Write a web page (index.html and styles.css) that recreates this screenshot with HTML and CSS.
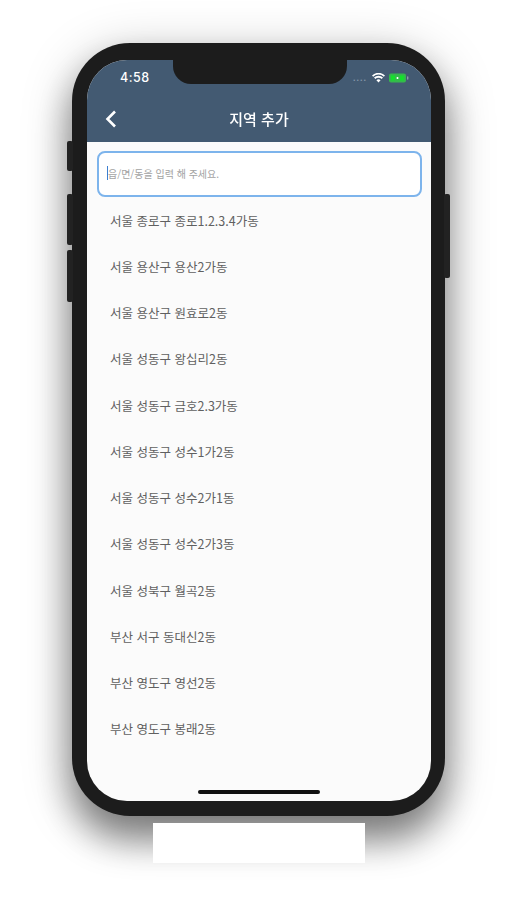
FILE: index.html
```html
<!DOCTYPE html>
<html lang="ko">
<head>
<meta charset="utf-8">
<title>지역 추가</title>
<link rel="stylesheet" href="styles.css">
</head>
<body>
<div class="phone">
  <span class="side-btn left b1"></span>
  <span class="side-btn left b2"></span>
  <span class="side-btn left b3"></span>
  <span class="side-btn right b4"></span>
  <div class="screen">
    <header class="appbar">
      <div class="status">
        <span class="time">4:58</span>
        <span class="status-icons">
          <span class="signal">....</span>
          <svg class="wifi" width="13" height="10" viewBox="0 0 13 10"><path d="M6.5 9.6 L4.4 7.2 A3 3 0 0 1 8.6 7.2Z M3.3 6 L2 4.6 A6.4 6.4 0 0 1 11 4.6 L9.7 6 A4.6 4.6 0 0 0 3.3 6Z M1.2 3.7 L0 2.5 A9.2 9.2 0 0 1 13 2.5 L11.8 3.7 A7.6 7.6 0 0 0 1.2 3.7Z" fill="#fff"/></svg>
          <svg class="battery" width="20" height="10" viewBox="0 0 20 10"><rect x="0" y="0.5" width="17" height="9" rx="2" fill="#35b94c"/><rect x="18" y="3.2" width="1.4" height="3.6" rx="0.7" fill="#8a9aa8"/><path d="M2 2.5h4v5H2z M11 2.5h4v5h-4z" fill="#14e02c"/><path d="M7.5 5h2M8.5 4v2" stroke="#fff" stroke-width="1.2" fill="none"/></svg>
        </span>
      </div>
      <div class="titlebar">
        <svg class="back" width="12" height="18" viewBox="0 0 12 18"><path d="M10 1.5 L2.5 9 L10 16.5" fill="none" stroke="#fff" stroke-width="2.6"/></svg>
        <h1 class="title">지역 추가</h1>
      </div>
    </header>
    <div class="notch"></div>
    <div class="search">
      <div class="field"><i class="caret"></i><span class="placeholder">읍/면/동을 입력 해 주세요.</span></div>
    </div>
    <ul class="list">
      <li>서울 종로구 종로1.2.3.4가동</li>
      <li>서울 용산구 용산2가동</li>
      <li>서울 용산구 원효로2동</li>
      <li>서울 성동구 왕십리2동</li>
      <li>서울 성동구 금호2.3가동</li>
      <li>서울 성동구 성수1가2동</li>
      <li>서울 성동구 성수2가1동</li>
      <li>서울 성동구 성수2가3동</li>
      <li>서울 성북구 월곡2동</li>
      <li>부산 서구 동대신2동</li>
      <li>부산 영도구 영선2동</li>
      <li>부산 영도구 봉래2동</li>
    </ul>
    <div class="home"></div>
  </div>
</div>
<div class="label-patch"></div>
</body>
</html>
```

FILE: styles.css
```css
* { box-sizing: border-box; }
html, body { margin: 0; padding: 0; }
body {
  width: 517px;
  height: 900px;
  background: #fff;
  overflow: hidden;
  position: relative;
  font-family: "Noto Sans CJK KR", "Noto Sans", sans-serif;
  padding: 43px 72px 0;
}
.phone {
  position: relative;
  width: 373px;
  height: 773px;
  padding: 17px 14px 15px 15px;
  background: #1c1c1c;
  border-radius: 58px;
  box-shadow: 0 24px 36px rgba(0,0,0,.42), 0 10px 50px rgba(0,0,0,.26);
  filter: blur(.7px);
}
.side-btn {
  position: absolute;
  width: 6px;
  background: #222;
  border-radius: 2px;
}
.left { left: -5px; }
.right { right: -5px; }
.b1 { top: 98px; height: 30px; }
.b2 { top: 151px; height: 51px; }
.b3 { top: 207px; height: 52px; }
.b4 { top: 151px; height: 84px; }
.screen {
  position: relative;
  width: 344px;
  height: 741px;
  background: #fbfbfb;
  border-radius: 40px;
  overflow: hidden;
}
.appbar {
  height: 82px;
  background: #435a72;
  color: #fff;
  display: flex;
  flex-direction: column;
}
.status {
  height: 38px;
  padding: 7px 22px 0 33px;
  display: flex;
  justify-content: space-between;
  align-items: flex-start;
}
.time { font: 500 12.5px/22px "Inter", sans-serif; letter-spacing: .5px; }
.status-icons { display: flex; align-items: center; gap: 4px; height: 22px; }
.signal { font: 700 9px/10px "Liberation Sans", sans-serif; color: #8497a8; letter-spacing: 1px; margin-right: 1px; }
.titlebar {
  flex: 1;
  position: relative;
  display: flex;
  align-items: flex-start;
  justify-content: center;
}
.back { position: absolute; left: 18px; top: 12px; }
.title {
  margin: 0;
  font-size: 15px;
  font-weight: 500;
  line-height: 40px;
  margin-top: 1px;
}
.notch {
  position: absolute;
  top: 0;
  left: 86px;
  width: 174px;
  height: 24px;
  background: #1c1c1c;
  border-radius: 0 0 18px 18px;
}
.search { padding: 9px 9px 0 10px; }
.field {
  height: 46px;
  display: flex;
  align-items: center;
  background: #fff;
  border: 2px solid #7db4ec;
  border-radius: 8px;
  padding: 0 0 2px 7.5px;
}
.caret {
  width: 1.5px;
  height: 14px;
  background: #3d7fd0;
  flex: none;
}
.placeholder { font-size: 10px; color: #a3a3a3; }
.list {
  list-style: none;
  margin: 0;
  padding: 0.5px 0 0 23px;
}
.list li {
  height: 46.27px;
  line-height: 46.27px;
  font-size: 12.5px;
  color: #606060;
}
.home {
  position: absolute;
  left: 111px;
  bottom: 7px;
  width: 122px;
  height: 4px;
  border-radius: 2px;
  background: #111;
}
.label-patch {
  position: absolute;
  left: 153px;
  top: 823px;
  width: 212px;
  height: 40px;
  background: #fff;
}
```
